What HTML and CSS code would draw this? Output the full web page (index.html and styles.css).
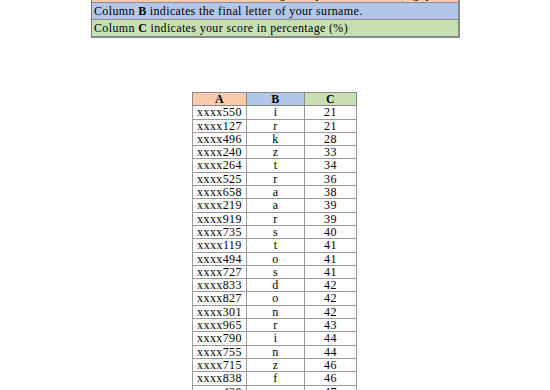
FILE: index.html
```html
<!DOCTYPE html>
<html>
<head>
<meta charset="utf-8">
<link rel="stylesheet" href="styles.css">
</head>
<body>
<div class="page">
  <div class="legend">
    <div class="legend-row row-a">Column <b>A</b> indicates the last three digits of your student ID (e.g. your ID).</div>
    <div class="legend-row row-b">Column <b>B</b> indicates the final letter of your surname.</div>
    <div class="legend-row row-c">Column <b>C</b> indicates your score in percentage (%)</div>
  </div>
  <table class="grades">
    <thead>
      <tr><th class="h-a">A</th><th class="h-b">B</th><th class="h-c">C</th></tr>
    </thead>
    <tbody>
      <tr><td>xxxx550</td><td>i</td><td>21</td></tr>
      <tr><td>xxxx127</td><td>r</td><td>21</td></tr>
      <tr><td>xxxx496</td><td>k</td><td>28</td></tr>
      <tr><td>xxxx240</td><td>z</td><td>33</td></tr>
      <tr><td>xxxx264</td><td>t</td><td>34</td></tr>
      <tr><td>xxxx525</td><td>r</td><td>36</td></tr>
      <tr><td>xxxx658</td><td>a</td><td>38</td></tr>
      <tr><td>xxxx219</td><td>a</td><td>39</td></tr>
      <tr><td>xxxx919</td><td>r</td><td>39</td></tr>
      <tr><td>xxxx735</td><td>s</td><td>40</td></tr>
      <tr><td>xxxx119</td><td>t</td><td>41</td></tr>
      <tr><td>xxxx494</td><td>o</td><td>41</td></tr>
      <tr><td>xxxx727</td><td>s</td><td>41</td></tr>
      <tr><td>xxxx833</td><td>d</td><td>42</td></tr>
      <tr><td>xxxx827</td><td>o</td><td>42</td></tr>
      <tr><td>xxxx301</td><td>n</td><td>42</td></tr>
      <tr><td>xxxx965</td><td>r</td><td>43</td></tr>
      <tr><td>xxxx790</td><td>i</td><td>44</td></tr>
      <tr><td>xxxx755</td><td>n</td><td>44</td></tr>
      <tr><td>xxxx715</td><td>z</td><td>46</td></tr>
      <tr><td>xxxx838</td><td>f</td><td>46</td></tr>
      <tr><td>xxxx430</td><td>s</td><td>47</td></tr>
    </tbody>
  </table>
</div>
</body>
</html>
```

FILE: styles.css
```css
html, body {
  margin: 0;
  padding: 0;
  background: #ffffff;
  overflow: hidden;
}

.page {
  font-family: "Liberation Serif", "Times New Roman", serif;
  color: #000;
  height: 390px;
  overflow: hidden;
}

.legend {
  margin-top: -15px;
  margin-left: 91px;
  width: 366px;
  border: 1px solid #7a7a7a;
  border-right: 2px solid #8a8a8a;
  border-bottom: 2px solid #8a8a8a;
  display: flex;
  flex-direction: column;
}

.legend-row {
  height: 16px;
  line-height: 16px;
  font-size: 12px;
  letter-spacing: 0.35px;
  padding-left: 2px;
  white-space: nowrap;
  overflow: hidden;
}

.legend-row + .legend-row {
  border-top: 1px solid #8c8c8c;
}

.row-a { background: #f8cbad; }
.row-b { background: #b4c6e7; }
.row-c { background: #c6e0b4; }

.grades {
  margin-top: 54px;
  margin-left: 192px;
  border-collapse: collapse;
  font-size: 12px;
  letter-spacing: 0.4px;
  table-layout: fixed;
}

.grades th,
.grades td {
  border: 1px solid #9a9a9a;
  padding: 0;
  height: 12.3px;
  line-height: 12.3px;
  text-align: center;
  font-weight: normal;
}

.grades th {
  font-weight: bold;
  border-color: #8a8a8a;
}

.grades th:nth-child(1), .grades td:nth-child(1) { width: 53px; }
.grades th:nth-child(2), .grades td:nth-child(2) { width: 57px; }
.grades th:nth-child(3), .grades td:nth-child(3) { width: 51px; }

.h-a { background: #f8cbad; }
.h-b { background: #b4c6e7; }
.h-c { background: #c6e0b4; }
```
